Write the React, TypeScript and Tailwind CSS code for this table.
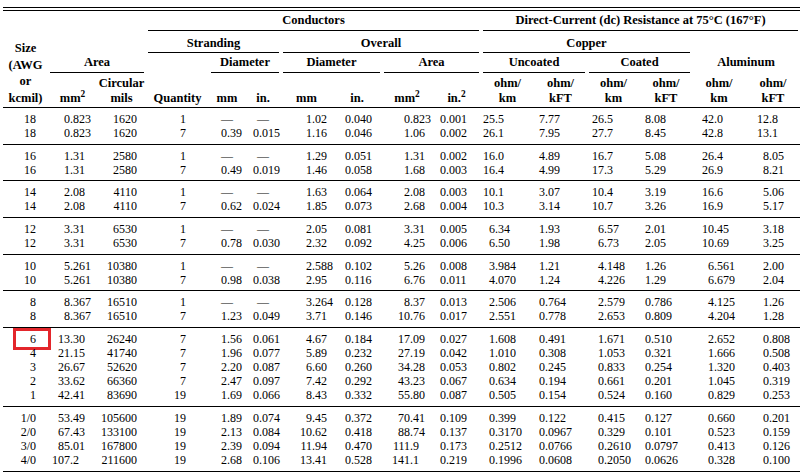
import React from "react";

const COLS =
  "grid grid-cols-[45px_49px_49px_63px_36px_36px_51px_50px_50px_49px_53px_53px_53px_52px_54px_54px]";

type Spec = { k: "r" | "d"; c: string };

const SPEC: Spec[] = [
  { k: "r", c: "pr-[12px]" },
  { k: "d", c: "w-[22px]" },
  { k: "r", c: "pr-[9px]" },
  { k: "r", c: "pr-[23px]" },
  { k: "d", c: "w-[18px]" },
  { k: "d", c: "w-[14px]" },
  { k: "d", c: "w-[31px]" },
  { k: "d", c: "w-[19px]" },
  { k: "d", c: "w-[28px]" },
  { k: "d", c: "w-[14px]" },
  { k: "d", c: "w-[14px]" },
  { k: "d", c: "w-[11px]" },
  { k: "d", c: "w-[17px]" },
  { k: "d", c: "w-[11px]" },
  { k: "d", c: "w-[22px]" },
  { k: "d", c: "w-[23px]" },
];

const GROUPS: string[][][] = [
  [
    ["18", "0.823", "1620", "1", "—", "—", "1.02", "0.040", "0.823", "0.001", "25.5", "7.77", "26.5", "8.08", "42.0", "12.8"],
    ["18", "0.823", "1620", "7", "0.39", "0.015", "1.16", "0.046", "1.06", "0.002", "26.1", "7.95", "27.7", "8.45", "42.8", "13.1"],
  ],
  [
    ["16", "1.31", "2580", "1", "—", "—", "1.29", "0.051", "1.31", "0.002", "16.0", "4.89", "16.7", "5.08", "26.4", "8.05"],
    ["16", "1.31", "2580", "7", "0.49", "0.019", "1.46", "0.058", "1.68", "0.003", "16.4", "4.99", "17.3", "5.29", "26.9", "8.21"],
  ],
  [
    ["14", "2.08", "4110", "1", "—", "—", "1.63", "0.064", "2.08", "0.003", "10.1", "3.07", "10.4", "3.19", "16.6", "5.06"],
    ["14", "2.08", "4110", "7", "0.62", "0.024", "1.85", "0.073", "2.68", "0.004", "10.3", "3.14", "10.7", "3.26", "16.9", "5.17"],
  ],
  [
    ["12", "3.31", "6530", "1", "—", "—", "2.05", "0.081", "3.31", "0.005", "6.34", "1.93", "6.57", "2.01", "10.45", "3.18"],
    ["12", "3.31", "6530", "7", "0.78", "0.030", "2.32", "0.092", "4.25", "0.006", "6.50", "1.98", "6.73", "2.05", "10.69", "3.25"],
  ],
  [
    ["10", "5.261", "10380", "1", "—", "—", "2.588", "0.102", "5.26", "0.008", "3.984", "1.21", "4.148", "1.26", "6.561", "2.00"],
    ["10", "5.261", "10380", "7", "0.98", "0.038", "2.95", "0.116", "6.76", "0.011", "4.070", "1.24", "4.226", "1.29", "6.679", "2.04"],
  ],
  [
    ["8", "8.367", "16510", "1", "—", "—", "3.264", "0.128", "8.37", "0.013", "2.506", "0.764", "2.579", "0.786", "4.125", "1.26"],
    ["8", "8.367", "16510", "7", "1.23", "0.049", "3.71", "0.146", "10.76", "0.017", "2.551", "0.778", "2.653", "0.809", "4.204", "1.28"],
  ],
  [
    ["6", "13.30", "26240", "7", "1.56", "0.061", "4.67", "0.184", "17.09", "0.027", "1.608", "0.491", "1.671", "0.510", "2.652", "0.808"],
    ["4", "21.15", "41740", "7", "1.96", "0.077", "5.89", "0.232", "27.19", "0.042", "1.010", "0.308", "1.053", "0.321", "1.666", "0.508"],
    ["3", "26.67", "52620", "7", "2.20", "0.087", "6.60", "0.260", "34.28", "0.053", "0.802", "0.245", "0.833", "0.254", "1.320", "0.403"],
    ["2", "33.62", "66360", "7", "2.47", "0.097", "7.42", "0.292", "43.23", "0.067", "0.634", "0.194", "0.661", "0.201", "1.045", "0.319"],
    ["1", "42.41", "83690", "19", "1.69", "0.066", "8.43", "0.332", "55.80", "0.087", "0.505", "0.154", "0.524", "0.160", "0.829", "0.253"],
  ],
  [
    ["1/0", "53.49", "105600", "19", "1.89", "0.074", "9.45", "0.372", "70.41", "0.109", "0.399", "0.122", "0.415", "0.127", "0.660", "0.201"],
    ["2/0", "67.43", "133100", "19", "2.13", "0.084", "10.62", "0.418", "88.74", "0.137", "0.3170", "0.0967", "0.329", "0.101", "0.523", "0.159"],
    ["3/0", "85.01", "167800", "19", "2.39", "0.094", "11.94", "0.470", "111.9", "0.173", "0.2512", "0.0766", "0.2610", "0.0797", "0.413", "0.126"],
    ["4/0", "107.2", "211600", "19", "2.68", "0.106", "13.41", "0.528", "141.1", "0.219", "0.1996", "0.0608", "0.2050", "0.0626", "0.328", "0.100"],
  ],
];

function Cell({ v, i, mark }: { v: string; i: number; mark?: boolean }) {
  const s = SPEC[i];
  if (v === "—") return <div className="text-center">—</div>;
  if (s.k === "r") {
    return (
      <div className={"relative text-right " + s.c}>
        {v}
        {mark && (
          <div className="absolute left-[10px] top-[-4px] h-[22px] w-[38px] border-[3px] border-[#e3262b]" />
        )}
      </div>
    );
  }
  const [a, b] = v.split(".");
  return (
    <div className="flex">
      <span className={"shrink-0 text-right " + s.c}>{a}</span>
      {b !== undefined && <span>.{b}</span>}
    </div>
  );
}

function Rule({ cls, children, pb }: { cls: string; children: React.ReactNode; pb: string }) {
  return (
    <div className={cls + " flex items-end"}>
      <div className={"mx-[2px] flex-1 border-b border-black text-center leading-[14px] " + pb}>{children}</div>
    </div>
  );
}

function Sub({ cls, children }: { cls: string; children: React.ReactNode }) {
  return (
    <div className={cls + " row-start-4 flex items-end justify-center"}>
      <div className="pb-[1px] text-center leading-[15px]">{children}</div>
    </div>
  );
}

export default function App() {
  return (
    <div className="h-[473px] w-[808px] overflow-hidden bg-white font-['Liberation_Serif',serif] text-[12px] text-black">
      <div className="ml-[3px] w-[797px] pt-[7px]">
        <div className="h-[4px] border-y border-black" />
        <div
          className={
            COLS + " grid-rows-[20px_22px_20px_34px] border-b border-black text-[12.5px] font-bold"
          }
        >
          <Rule cls="col-start-4 col-span-7 row-start-1" pb="pb-[3px]">Conductors</Rule>
          <Rule cls="col-start-11 col-span-6 row-start-1" pb="pb-[3px]">
            Direct-Current (dc) Resistance at 75°C (167°F)
          </Rule>
          <div className="col-start-1 row-start-2 row-span-3 flex items-end justify-center">
            <div className="pb-[1px] text-center leading-[16.5px]">
              Size
              <br />
              (AWG
              <br />
              or
              <br />
              kcmil)
            </div>
          </div>
          <Rule cls="col-start-4 col-span-3 row-start-2" pb="pb-[2px]">Stranding</Rule>
          <Rule cls="col-start-7 col-span-4 row-start-2" pb="pb-[2px]">Overall</Rule>
          <Rule cls="col-start-11 col-span-4 row-start-2" pb="pb-[2px]">Copper</Rule>
          <Rule cls="col-start-2 col-span-2 row-start-3" pb="pb-[3px]">Area</Rule>
          <Rule cls="col-start-5 col-span-2 row-start-3" pb="pb-[3px]">Diameter</Rule>
          <Rule cls="col-start-7 col-span-2 row-start-3" pb="pb-[3px]">Diameter</Rule>
          <Rule cls="col-start-9 col-span-2 row-start-3" pb="pb-[3px]">Area</Rule>
          <Rule cls="col-start-11 col-span-2 row-start-3" pb="pb-[3px]">Uncoated</Rule>
          <Rule cls="col-start-13 col-span-2 row-start-3" pb="pb-[3px]">Coated</Rule>
          <div className="col-start-15 col-span-2 row-start-3 flex items-end justify-center pb-[4px] leading-[14px]">
            Aluminum
          </div>
          <Sub cls="col-start-2">
            mm<sup>2</sup>
          </Sub>
          <Sub cls="col-start-3">
            Circular
            <br />
            mils
          </Sub>
          <Sub cls="col-start-4">Quantity</Sub>
          <Sub cls="col-start-5">mm</Sub>
          <Sub cls="col-start-6">in.</Sub>
          <Sub cls="col-start-7">mm</Sub>
          <Sub cls="col-start-8">in.</Sub>
          <Sub cls="col-start-9">
            mm<sup>2</sup>
          </Sub>
          <Sub cls="col-start-10">
            in.<sup>2</sup>
          </Sub>
          <Sub cls="col-start-11">
            ohm/
            <br />
            km
          </Sub>
          <Sub cls="col-start-12">
            ohm/
            <br />
            kFT
          </Sub>
          <Sub cls="col-start-13">
            ohm/
            <br />
            km
          </Sub>
          <Sub cls="col-start-14">
            ohm/
            <br />
            kFT
          </Sub>
          <Sub cls="col-start-15">
            ohm/
            <br />
            km
          </Sub>
          <Sub cls="col-start-16">
            ohm/
            <br />
            kFT
          </Sub>
        </div>
        {GROUPS.map((g, gi) => (
          <div key={gi} className="border-b border-black pb-[3.7px] pt-[4px]">
            {g.map((row, ri) => (
              <div key={ri} className={COLS + " h-[14px] leading-[14px]"}>
                {row.map((v, ci) => (
                  <Cell key={ci} v={v} i={ci} mark={gi === 6 && ri === 0 && ci === 0} />
                ))}
              </div>
            ))}
          </div>
        ))}
      </div>
    </div>
  );
}
